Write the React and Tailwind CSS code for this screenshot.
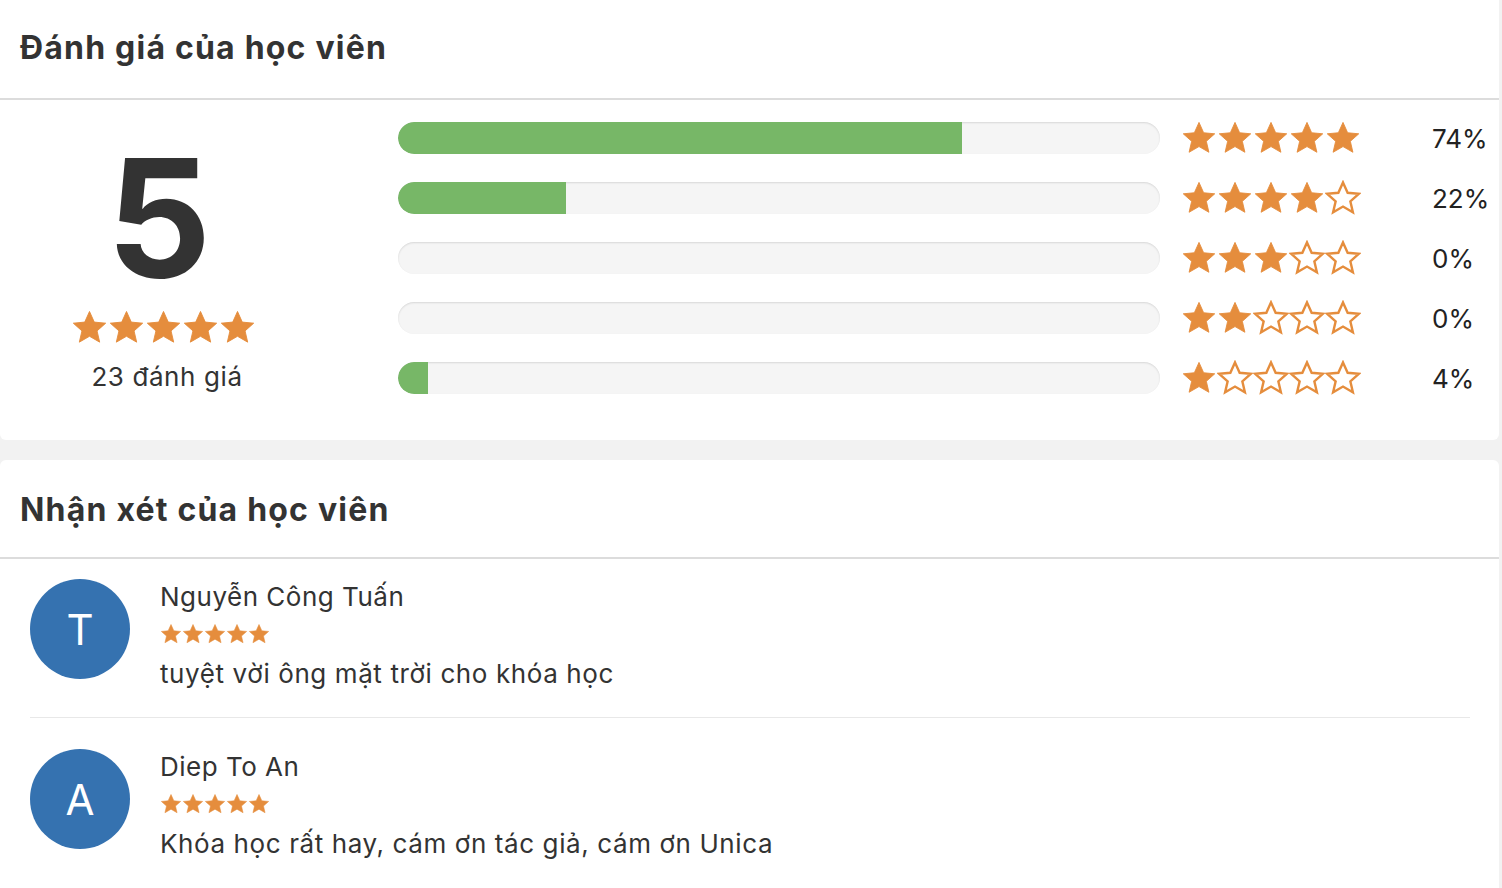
import React from "react";

const STAR =
  "M12 1.6l3.1 6.9 7.4.7-5.6 5 1.7 7.3L12 17.7l-6.6 3.8 1.7-7.3-5.6-5 7.4-.7z";

function Star({ filled, size }) {
  return (
    <svg width={size} height={size} viewBox="0 0 24 24">
      <path
        d={STAR}
        fill={filled ? "#e58d3d" : "#ffffff"}
        stroke="#e58d3d"
        strokeWidth={filled ? 0.6 : 1.6}
        strokeLinejoin="miter"
      />
    </svg>
  );
}

function Stars({ count, size }) {
  return (
    <div className="flex">
      {[0, 1, 2, 3, 4].map((i) => (
        <Star key={i} filled={i < count} size={size} />
      ))}
    </div>
  );
}

const rows = [
  { stars: 5, pct: 74 },
  { stars: 4, pct: 22 },
  { stars: 3, pct: 0 },
  { stars: 2, pct: 0 },
  { stars: 1, pct: 4 },
];

const reviews = [
  { letter: "T", name: "Nguyễn Công Tuấn", text: "tuyệt vời ông mặt trời cho khóa học" },
  { letter: "A", name: "Diep To An", text: "Khóa học rất hay, cám ơn tác giả, cám ơn Unica" },
];

export default function App() {
  return (
    <div
      className="w-[1502px] h-[888px] overflow-hidden bg-[#f2f2f2] text-[#333]"
      style={{ fontFamily: "Inter, 'Liberation Sans', sans-serif" }}
    >
      {/* ================= RATING ================= */}
      <div className="w-[1499px] h-[440px] bg-white rounded-b-md">
        <div className="h-[100px] border-b-2 border-[#dcdcdc] px-[20px] flex items-center">
          <h2 className="text-[32px] font-bold tracking-[1.2px] text-[#333] mt-[-2px]">
            Đánh giá của học viên
          </h2>
        </div>
        <div className="flex pt-[22px]">
          <div className="w-[340px] flex flex-col items-center">
            <div className="text-[164px] font-bold leading-[164px] mt-[14px] text-[#333] mr-[22px]">5</div>
            <div className="mt-[9px] mr-[13px]">
              <Stars count={5} size={37} />
            </div>
            <div className="text-[26px] tracking-[0.6px] mt-[11px] mr-[6px] text-[#333]">23 đánh giá</div>
          </div>
          <div className="flex flex-col gap-[28px] pl-[58px]">
            {rows.map((r) => (
              <div key={r.stars} className="flex items-center h-[32px]">
                <div className="w-[762px] h-[32px] rounded-full bg-[#f5f5f5] shadow-[inset_0_1px_2px_rgba(0,0,0,0.12)] overflow-hidden">
                  <div
                    className="h-full bg-[#77b767] rounded-l-full"
                    style={{ width: `${r.pct}%` }}
                  />
                </div>
                <div className="ml-[21px] w-[251px]">
                  <Stars count={r.stars} size={36} />
                </div>
                <div className="text-[26px] text-[#222]">{r.pct}%</div>
              </div>
            ))}
          </div>
        </div>
      </div>

      {/* ================= REVIEWS ================= */}
      <div className="w-[1499px] h-[428px] mt-[20px] bg-white rounded-t-md">
        <div className="h-[99px] border-b-2 border-[#dcdcdc] px-[20px] flex items-center">
          <h2 className="text-[32px] font-bold tracking-[1.2px] text-[#333] mt-[2px]">
            Nhận xét của học viên
          </h2>
        </div>
        <div className="px-[30px]">
          {reviews.map((rv, i) => (
            <div
              key={rv.name}
              className={`flex w-[1440px] ${i === 0 ? "pt-[20px] pb-[25px] border-b border-[#e8e8e8]" : "pt-[31px]"}`}
            >
              <div className="w-[100px] h-[100px] rounded-full bg-[#3572b0] text-white flex items-center justify-center text-[42px] shrink-0">
                {rv.letter}
              </div>
              <div className="ml-[30px]">
                <div className="text-[26px] leading-[36px] tracking-[0.5px] text-[#333]">{rv.name}</div>
                <div className="mt-[8px]">
                  <Stars count={5} size={22} />
                </div>
                <div className="text-[26px] leading-[36px] tracking-[0.6px] mt-[11px] text-[#333]">{rv.text}</div>
              </div>
            </div>
          ))}
        </div>
      </div>
    </div>
  );
}
